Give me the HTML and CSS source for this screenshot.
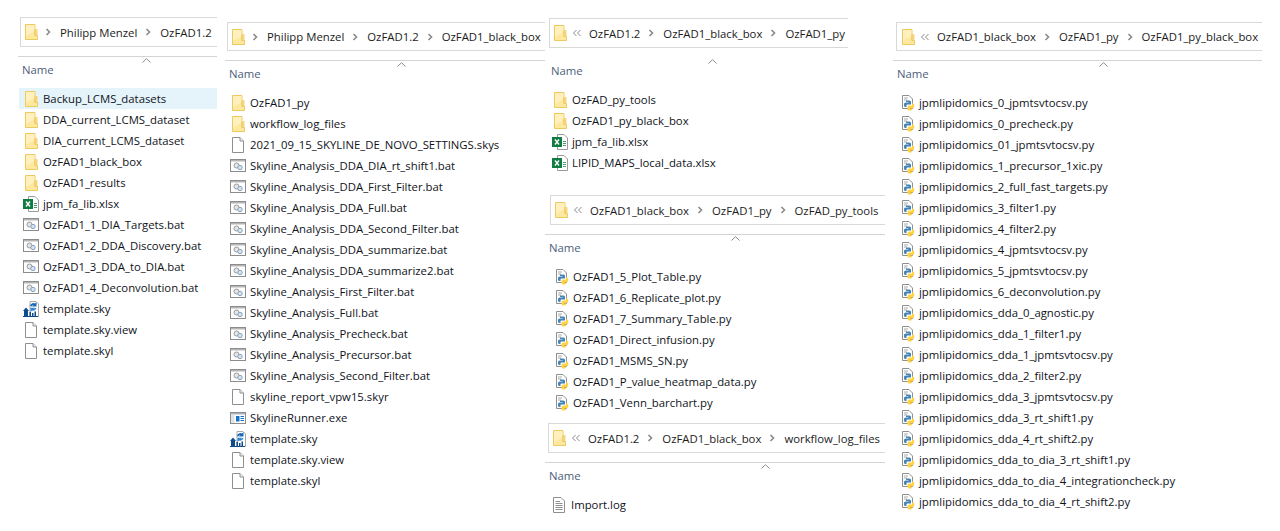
FILE: index.html
```html
<!DOCTYPE html>
<html>
<head>
  <meta charset="UTF-8">
  <title>OzFAD1 folders</title>
  <link rel="stylesheet" href="styles.css">
</head>
<body>

<!-- icons -->
<svg class="sprite" width="0" height="0">
  <symbol id="folder" viewBox="0 0 16 16">
    <path d="M2.500 .5H12V11.500H14.500V15.500H2.500Z" fill="#fde8a0" stroke="#eec95f"/>
    <path d="M3 1H11.500V7L3 12Z" fill="#fff0bd"/>
    <path d="M12.500 5H14.500V11H12.500Z" fill="#f6d67c"/>
    <path d="M12 5V11.500" stroke="#eec95f"/>
  </symbol>
  <symbol id="blank" viewBox="0 0 16 16">
    <path d="M2.500 .5H10L13.500 4V15.500H2.500Z" fill="#fff" stroke="#8f8f8f"/>
    <path d="M10 .5V4H13.500" fill="#f0f0f0" stroke="#8f8f8f"/>
  </symbol>
  <symbol id="log" viewBox="0 0 16 16">
    <path d="M2.500 .5H10L13.500 4V15.500H2.500Z" fill="#fff" stroke="#8f8f8f"/>
    <path d="M4.500 4.500H9M4.500 6.500H11.500M4.500 8.500H11.500M4.500 10.500H11.500M4.500 12.500H11.500" stroke="#8f8f8f"/>
  </symbol>
  <symbol id="xls" viewBox="0 0 16 16">
    <path d="M5.500 .5H12L15.500 4V15.500H5.500Z" fill="#fff" stroke="#9a9a9a"/>
    <path d="M11 7.500H14M11 9.500H14M11 11.500H14" stroke="#4f9a70"/>
    <rect x="0" y="3" width="10" height="10" fill="#107c41"/>
    <path d="M3 5.500L7 10.500M7 5.500L3 10.500" stroke="#fff" stroke-width="1.400"/>
  </symbol>
  <symbol id="bat" viewBox="0 0 16 16">
    <rect x=".5" y="1.500" width="15" height="12" fill="#fff" stroke="#8c8c8c"/>
    <rect x="1" y="2" width="14" height="1.500" fill="#b5b5b5"/>
    <circle cx="6.500" cy="7.500" r="2.500" fill="#e6e6e6" stroke="#9a9a9a"/>
    <circle cx="10" cy="9.500" r="2.200" fill="#d5e4f0" stroke="#86a3ba"/>
  </symbol>
  <symbol id="sky" viewBox="0 0 16 16">
    <path d="M7 .5H13L15.500 3V15.500H7Z" fill="#fff" stroke="#a8a8a8"/>
    <path d="M7 5A3.500 3.500 0 0 1 12 2.500L13.500 1V5.500H9L10.500 4A2 2 0 0 0 8.500 5.500Z" fill="#1c67b5"/>
    <path d="M13.500 7A3.500 3.500 0 0 1 9 9.500L7.500 11V6.800H12L10.700 8A2 2 0 0 0 12 7Z" fill="#2f86d2"/>
    <path d="M0 10L3 6.500L6 10H5V15.500H1V10Z" fill="#0f4c8c"/>
    <path d="M6.500 15.500V11H8V15.500ZM9 15.500V12H10.500V15.500ZM11.500 15.500V10.500H13V15.500Z" fill="#0f4c8c"/>
    <path d="M0 15H15V16H0Z" fill="#0f4c8c"/>
  </symbol>
  <symbol id="exe" viewBox="0 0 16 16">
    <rect x=".5" y="2.500" width="15" height="11" fill="#fff" stroke="#8c8c8c"/>
    <rect x="1" y="3" width="14" height="1.500" fill="#a9b4bd"/>
    <rect x="1" y="4.500" width="3.500" height="8.500" fill="#dfe3e7"/>
    <rect x="6" y="6" width="3.500" height="5.500" fill="#1573c9"/>
    <path d="M10.500 6.500H14M10.500 8.500H14M10.500 10.500H14" stroke="#1573c9"/>
  </symbol>
  <symbol id="py" viewBox="0 0 16 16">
    <path d="M3.500 .5H10L13.500 4V13.500H3.500Z" fill="#fff" stroke="#8f8f8f"/>
    <path d="M5 3H9M5 5H8" stroke="#a9a9a9"/>
    <path d="M7 5.500H10.500A1.500 1.500 0 0 1 12 7V9.500H8.500A1 1 0 0 0 7.500 10.500V12H6.500A1.500 1.500 0 0 1 5 10.500V9A1.500 1.500 0 0 1 6.500 7.500H9.500V7H7Z" fill="#4584b6"/>
    <path d="M13 8.500H13.800A1.400 1.400 0 0 1 15.200 10V11.500A1.400 1.400 0 0 1 13.800 13H11V13.500H13V14A1.500 1.500 0 0 1 11.500 15.500H10A1.500 1.500 0 0 1 8.500 14V12A1.500 1.500 0 0 1 10 10.500H13Z" fill="#ffd343"/>
  </symbol>
  <symbol id="sep" viewBox="0 0 8 8">
    <path d="M2.500 1L5.500 4L2.500 7" fill="none" stroke="#8a8a8a" stroke-width="1.600"/>
  </symbol>
  <symbol id="more" viewBox="0 0 10 8">
    <path d="M4.500 1L1.500 4L4.500 7M8.500 1L5.500 4L8.500 7" fill="none" stroke="#8a8a8a"/>
  </symbol>
  <symbol id="caret" viewBox="0 0 9 5">
    <path d="M.5 4.500L4.500 .7L8.500 4.500" fill="none" stroke="#8c8c8c"/>
  </symbol>
</svg>

<!-- OzFAD1.2 -->
<section class="win win-a">
  <div class="addr">
    <svg class="addr-folder"><use href="#folder"/></svg>
    <svg class="sep"><use href="#sep"/></svg><span>Philipp Menzel</span>
    <svg class="sep"><use href="#sep"/></svg><span>OzFAD1.2</span>
  </div>
  <div class="head"><svg class="caret"><use href="#caret"/></svg><span class="name">Name</span></div>
  <ul class="files">
    <li class="sel"><svg><use href="#folder"/></svg>Backup_LCMS_datasets</li>
    <li><svg><use href="#folder"/></svg>DDA_current_LCMS_dataset</li>
    <li><svg><use href="#folder"/></svg>DIA_current_LCMS_dataset</li>
    <li><svg><use href="#folder"/></svg>OzFAD1_black_box</li>
    <li><svg><use href="#folder"/></svg>OzFAD1_results</li>
    <li><svg><use href="#xls"/></svg>jpm_fa_lib.xlsx</li>
    <li><svg><use href="#bat"/></svg>OzFAD1_1_DIA_Targets.bat</li>
    <li><svg><use href="#bat"/></svg>OzFAD1_2_DDA_Discovery.bat</li>
    <li><svg><use href="#bat"/></svg>OzFAD1_3_DDA_to_DIA.bat</li>
    <li><svg><use href="#bat"/></svg>OzFAD1_4_Deconvolution.bat</li>
    <li><svg><use href="#sky"/></svg>template.sky</li>
    <li><svg><use href="#blank"/></svg>template.sky.view</li>
    <li><svg><use href="#blank"/></svg>template.skyl</li>
  </ul>
</section>

<!-- OzFAD1_black_box -->
<section class="win win-b">
  <div class="addr">
    <svg class="addr-folder"><use href="#folder"/></svg>
    <svg class="sep"><use href="#sep"/></svg><span>Philipp Menzel</span>
    <svg class="sep"><use href="#sep"/></svg><span>OzFAD1.2</span>
    <svg class="sep"><use href="#sep"/></svg><span>OzFAD1_black_box</span>
  </div>
  <div class="head"><svg class="caret"><use href="#caret"/></svg><span class="name">Name</span></div>
  <ul class="files">
    <li><svg><use href="#folder"/></svg>OzFAD1_py</li>
    <li><svg><use href="#folder"/></svg>workflow_log_files</li>
    <li><svg><use href="#blank"/></svg>2021_09_15_SKYLINE_DE_NOVO_SETTINGS.skys</li>
    <li><svg><use href="#bat"/></svg>Skyline_Analysis_DDA_DIA_rt_shift1.bat</li>
    <li><svg><use href="#bat"/></svg>Skyline_Analysis_DDA_First_Filter.bat</li>
    <li><svg><use href="#bat"/></svg>Skyline_Analysis_DDA_Full.bat</li>
    <li><svg><use href="#bat"/></svg>Skyline_Analysis_DDA_Second_Filter.bat</li>
    <li><svg><use href="#bat"/></svg>Skyline_Analysis_DDA_summarize.bat</li>
    <li><svg><use href="#bat"/></svg>Skyline_Analysis_DDA_summarize2.bat</li>
    <li><svg><use href="#bat"/></svg>Skyline_Analysis_First_Filter.bat</li>
    <li><svg><use href="#bat"/></svg>Skyline_Analysis_Full.bat</li>
    <li><svg><use href="#bat"/></svg>Skyline_Analysis_Precheck.bat</li>
    <li><svg><use href="#bat"/></svg>Skyline_Analysis_Precursor.bat</li>
    <li><svg><use href="#bat"/></svg>Skyline_Analysis_Second_Filter.bat</li>
    <li><svg><use href="#blank"/></svg>skyline_report_vpw15.skyr</li>
    <li><svg><use href="#exe"/></svg>SkylineRunner.exe</li>
    <li><svg><use href="#sky"/></svg>template.sky</li>
    <li><svg><use href="#blank"/></svg>template.sky.view</li>
    <li><svg><use href="#blank"/></svg>template.skyl</li>
  </ul>
</section>

<!-- OzFAD1_py -->
<section class="win win-c">
  <div class="addr">
    <svg class="addr-folder"><use href="#folder"/></svg>
    <svg class="more"><use href="#more"/></svg><span>OzFAD1.2</span>
    <svg class="sep"><use href="#sep"/></svg><span>OzFAD1_black_box</span>
    <svg class="sep"><use href="#sep"/></svg><span>OzFAD1_py</span>
  </div>
  <div class="head no-line"><svg class="caret"><use href="#caret"/></svg><span class="name">Name</span></div>
  <ul class="files">
    <li><svg><use href="#folder"/></svg>OzFAD_py_tools</li>
    <li><svg><use href="#folder"/></svg>OzFAD1_py_black_box</li>
    <li><svg><use href="#xls"/></svg>jpm_fa_lib.xlsx</li>
    <li><svg><use href="#xls"/></svg>LIPID_MAPS_local_data.xlsx</li>
  </ul>
</section>

<!-- OzFAD_py_tools -->
<section class="win win-d">
  <div class="addr">
    <svg class="addr-folder"><use href="#folder"/></svg>
    <svg class="more"><use href="#more"/></svg><span>OzFAD1_black_box</span>
    <svg class="sep"><use href="#sep"/></svg><span>OzFAD1_py</span>
    <svg class="sep"><use href="#sep"/></svg><span>OzFAD_py_tools</span>
  </div>
  <div class="head"><svg class="caret"><use href="#caret"/></svg><span class="name">Name</span></div>
  <ul class="files">
    <li><svg><use href="#py"/></svg>OzFAD1_5_Plot_Table.py</li>
    <li><svg><use href="#py"/></svg>OzFAD1_6_Replicate_plot.py</li>
    <li><svg><use href="#py"/></svg>OzFAD1_7_Summary_Table.py</li>
    <li><svg><use href="#py"/></svg>OzFAD1_Direct_infusion.py</li>
    <li><svg><use href="#py"/></svg>OzFAD1_MSMS_SN.py</li>
    <li><svg><use href="#py"/></svg>OzFAD1_P_value_heatmap_data.py</li>
    <li><svg><use href="#py"/></svg>OzFAD1_Venn_barchart.py</li>
  </ul>
</section>

<!-- workflow_log_files -->
<section class="win win-e">
  <div class="addr">
    <svg class="addr-folder"><use href="#folder"/></svg>
    <svg class="more"><use href="#more"/></svg><span>OzFAD1.2</span>
    <svg class="sep"><use href="#sep"/></svg><span>OzFAD1_black_box</span>
    <svg class="sep"><use href="#sep"/></svg><span>workflow_log_files</span>
  </div>
  <div class="head"><svg class="caret"><use href="#caret"/></svg><span class="name">Name</span></div>
  <ul class="files">
    <li><svg><use href="#log"/></svg>Import.log</li>
  </ul>
</section>

<!-- OzFAD1_py_black_box -->
<section class="win win-f">
  <div class="addr">
    <svg class="addr-folder"><use href="#folder"/></svg>
    <svg class="more"><use href="#more"/></svg><span>OzFAD1_black_box</span>
    <svg class="sep"><use href="#sep"/></svg><span>OzFAD1_py</span>
    <svg class="sep"><use href="#sep"/></svg><span>OzFAD1_py_black_box</span>
  </div>
  <div class="head"><svg class="caret"><use href="#caret"/></svg><span class="name">Name</span></div>
  <ul class="files">
    <li><svg><use href="#py"/></svg>jpmlipidomics_0_jpmtsvtocsv.py</li>
    <li><svg><use href="#py"/></svg>jpmlipidomics_0_precheck.py</li>
    <li><svg><use href="#py"/></svg>jpmlipidomics_01_jpmtsvtocsv.py</li>
    <li><svg><use href="#py"/></svg>jpmlipidomics_1_precursor_1xic.py</li>
    <li><svg><use href="#py"/></svg>jpmlipidomics_2_full_fast_targets.py</li>
    <li><svg><use href="#py"/></svg>jpmlipidomics_3_filter1.py</li>
    <li><svg><use href="#py"/></svg>jpmlipidomics_4_filter2.py</li>
    <li><svg><use href="#py"/></svg>jpmlipidomics_4_jpmtsvtocsv.py</li>
    <li><svg><use href="#py"/></svg>jpmlipidomics_5_jpmtsvtocsv.py</li>
    <li><svg><use href="#py"/></svg>jpmlipidomics_6_deconvolution.py</li>
    <li><svg><use href="#py"/></svg>jpmlipidomics_dda_0_agnostic.py</li>
    <li><svg><use href="#py"/></svg>jpmlipidomics_dda_1_filter1.py</li>
    <li><svg><use href="#py"/></svg>jpmlipidomics_dda_1_jpmtsvtocsv.py</li>
    <li><svg><use href="#py"/></svg>jpmlipidomics_dda_2_filter2.py</li>
    <li><svg><use href="#py"/></svg>jpmlipidomics_dda_3_jpmtsvtocsv.py</li>
    <li><svg><use href="#py"/></svg>jpmlipidomics_dda_3_rt_shift1.py</li>
    <li><svg><use href="#py"/></svg>jpmlipidomics_dda_4_rt_shift2.py</li>
    <li><svg><use href="#py"/></svg>jpmlipidomics_dda_to_dia_3_rt_shift1.py</li>
    <li><svg><use href="#py"/></svg>jpmlipidomics_dda_to_dia_4_integrationcheck.py</li>
    <li><svg><use href="#py"/></svg>jpmlipidomics_dda_to_dia_4_rt_shift2.py</li>
  </ul>
</section>

</body>
</html>
```

FILE: styles.css
```css
html, body {
  margin: 0;
  padding: 0;
  height: 531px;
  overflow: hidden;
  background: #fff;
}
body {
  position: relative;
  font-family: "Open Sans", "Noto Sans", sans-serif;
  font-size: 11.35px;
  color: #10131a;
}
.sprite {
  position: absolute;
}

/* each window is a loose screenshot on the canvas */
.win {
  position: absolute;
  display: flex;
  flex-direction: column;
  align-items: stretch;
  --bar-left: 2px;
  --bar-pad: 2px;
  --bar-h: 28px;
  --row-pad: 5px;
}
.win-a { left: 18px; top: 17px; width: 199px; }
.win-b { left: 225px; top: 22px; width: 320px; --bar-h: 27px; }
.win-c { left: 547px; top: 18px; width: 301px; }
.win-d { left: 545px; top: 195px; width: 340px; --bar-left: 5px; --row-pad: 8px; }
.win-e { left: 545px; top: 423px; width: 340px; --bar-left: 3px; --row-pad: 6px; }
.win-f { left: 893px; top: 22px; width: 369px; --bar-left: 3px; --bar-pad: 3px; --bar-h: 27px; --row-pad: 6px; }

/* address bar */
.addr {
  display: flex;
  align-items: center;
  height: var(--bar-h);
  margin-left: var(--bar-left);
  padding-left: var(--bar-pad);
  border: 1px solid #d9d9d9;
  border-right: 0;
  white-space: nowrap;
  overflow: hidden;
  color: #1b1b1b;
}
.addr svg {
  flex: none;
}
.addr-folder {
  width: 16px;
  height: 16px;
  margin-right: -2px;
}
.sep {
  width: 8px;
  height: 8px;
  margin: 0 8px 0 7px;
}
.more {
  width: 10px;
  height: 8px;
  margin: 0 7px 0 6px;
}

/* Name column */
.head {
  position: relative;
  height: 27px;
  margin-top: 9px;
  border-top: 1px solid #d4d4d4;
}
.head.no-line {
  border-top-color: transparent;
}
.caret {
  position: absolute;
  top: 1px;
  width: 9px;
  height: 5px;
}
.win-a .caret { left: 124px; }
.win-b .caret { left: 172px; }
.win-c .caret { left: 161px; }
.win-d .caret { left: 186px; }
.win-e .caret { left: 216px; }
.win-f .caret { left: 206px; }
.name {
  display: block;
  padding: 4px 0 0 4px;
  line-height: 17px;
  color: #4c607a;
}

/* rows */
.files {
  list-style: none;
  margin: 4px 0 0;
  padding: 0;
}
.files li {
  display: flex;
  align-items: center;
  height: 21px;
  padding-left: var(--row-pad);
  white-space: nowrap;
}
.files li svg {
  flex: none;
  width: 16px;
  height: 16px;
  margin-right: 4px;
}
.files li.sel {
  margin-left: 1px;
  padding-left: 4px;
  background: #e5f3fb;
}
```
